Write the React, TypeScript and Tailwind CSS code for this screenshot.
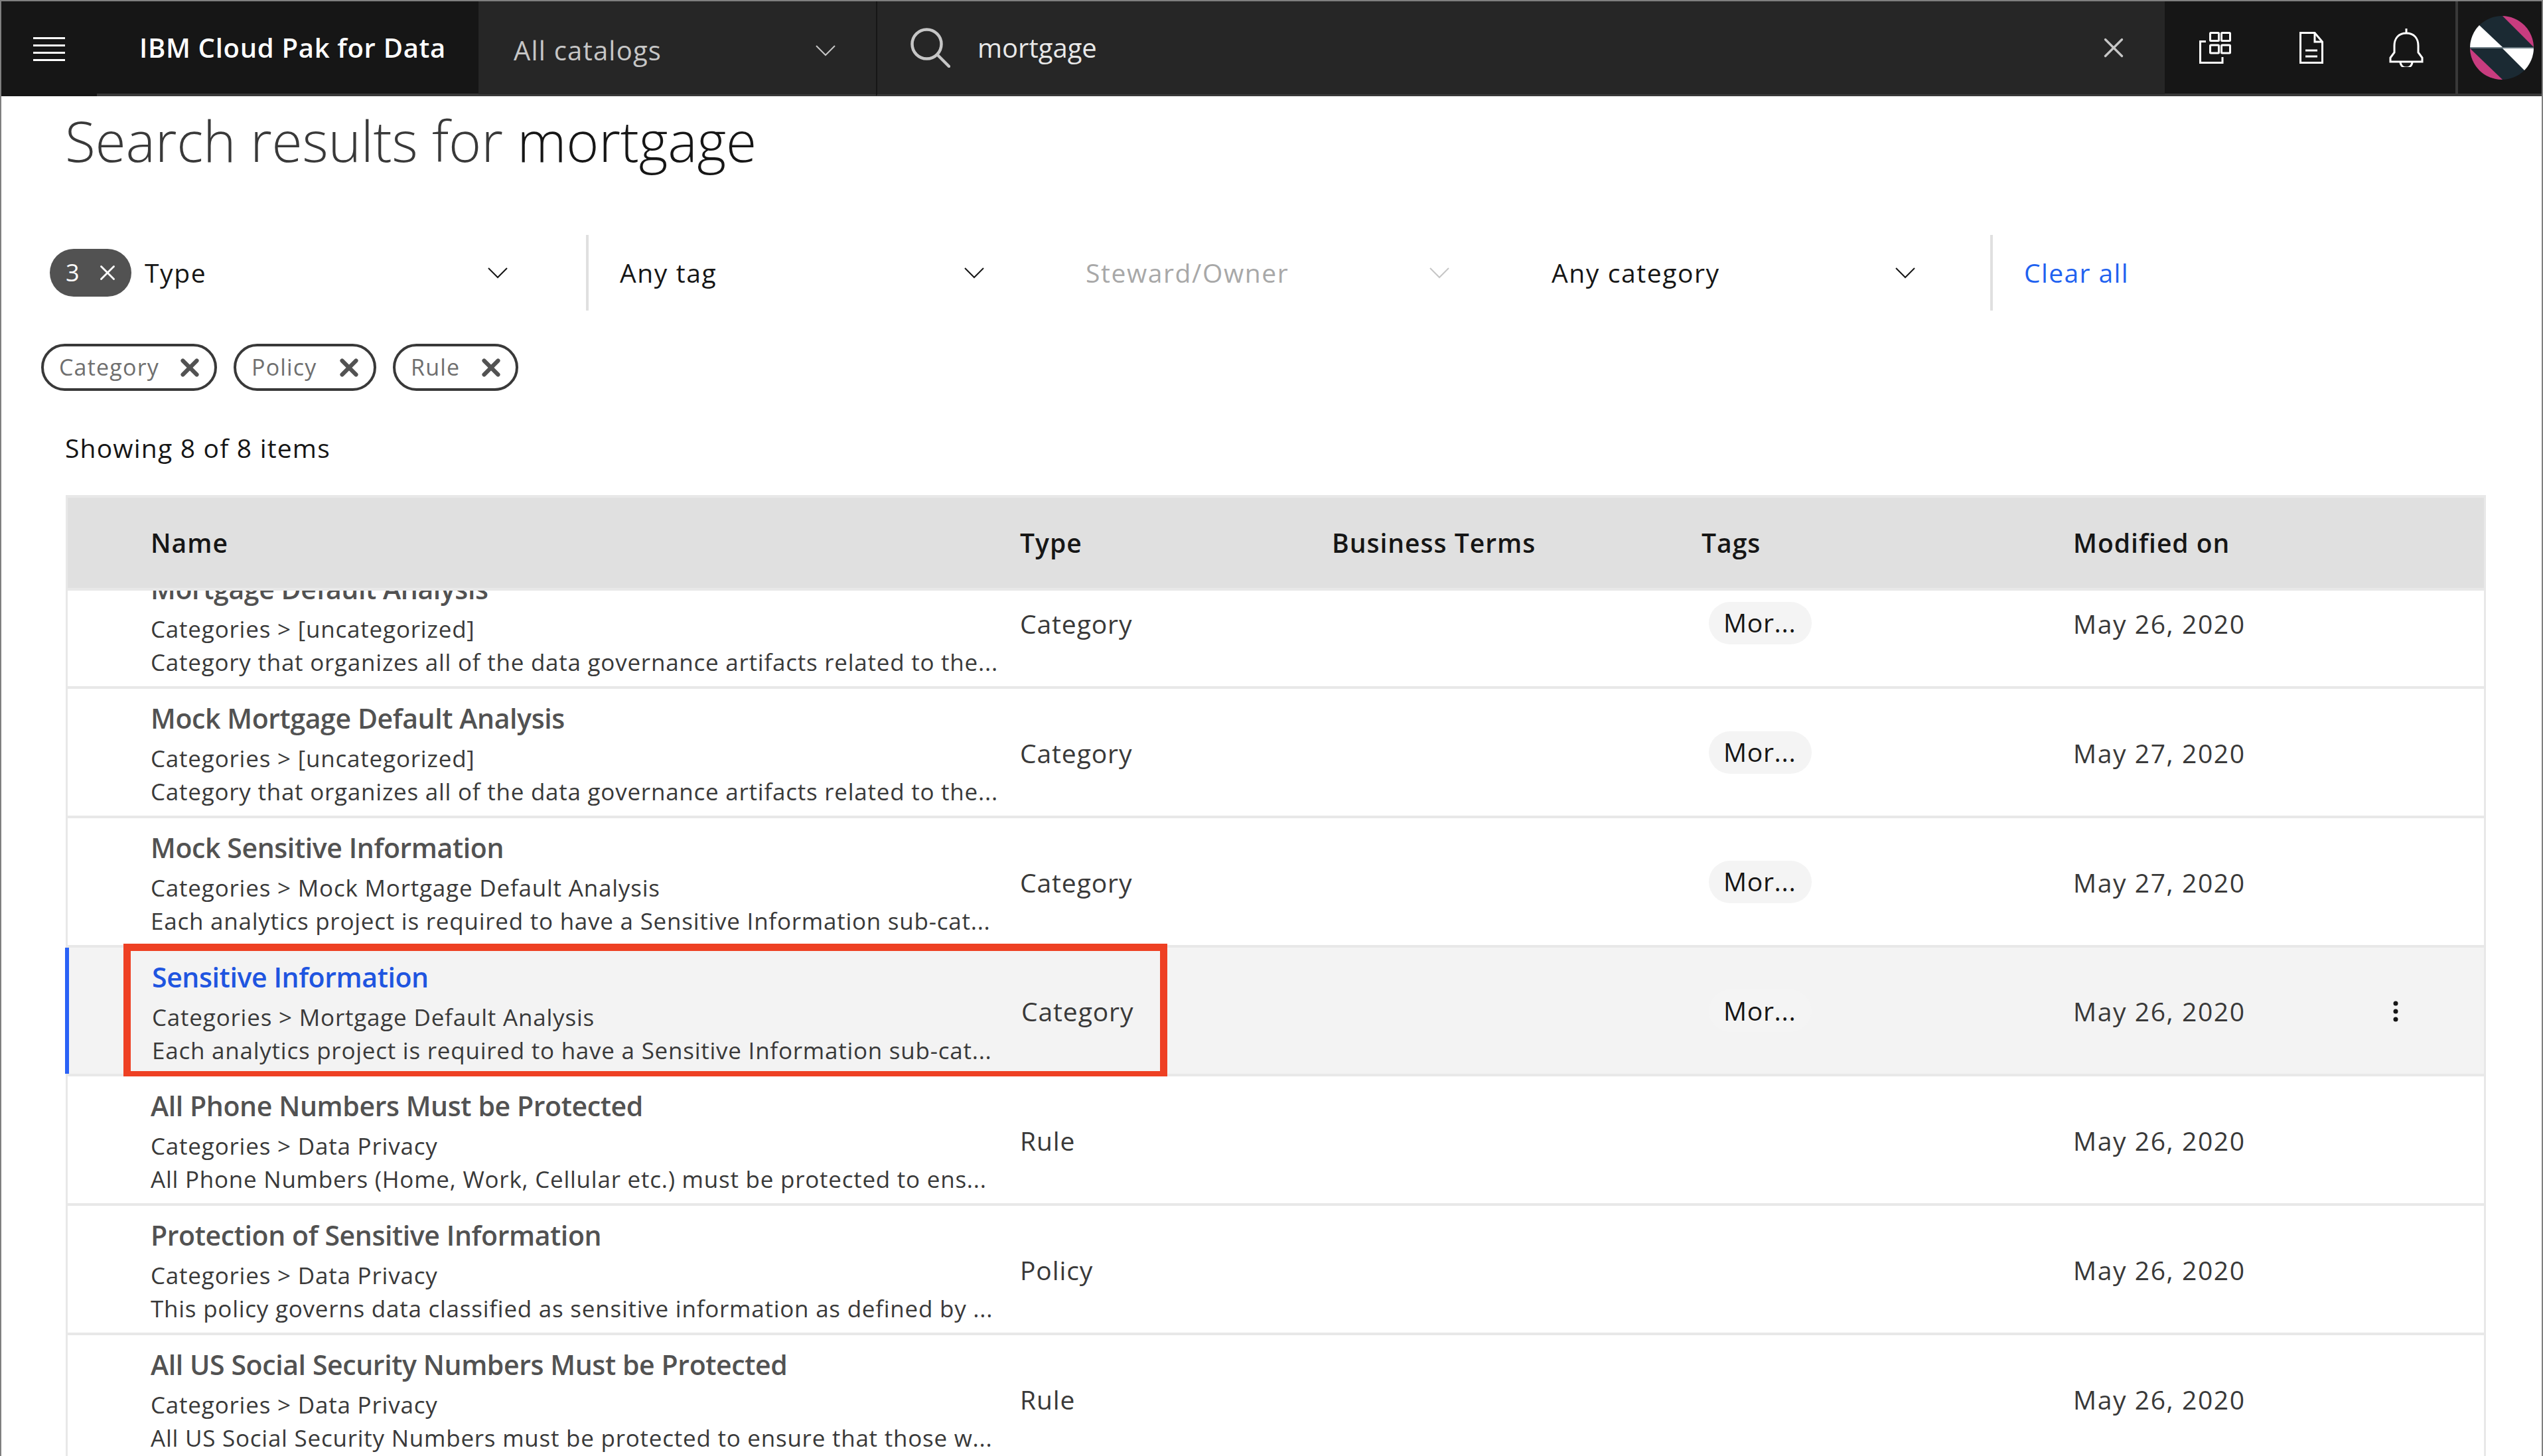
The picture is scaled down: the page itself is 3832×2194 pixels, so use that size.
import React from 'react';
import { X } from 'lucide-react';

const font = { fontFamily: '"Open Sans", "Noto Sans", sans-serif' };

interface ResultRow {
    name: string;
    path: string;
    description: string;
    type: string;
    tag?: boolean;
    date: string;
    selected?: boolean;
}

const rows: ResultRow[] = [
    { name: 'Mortgage Default Analysis', path: 'Categories > [uncategorized]', description: 'Category that organizes all of the data governance artifacts related to the...', type: 'Category', tag: true, date: 'May 26, 2020' },
    { name: 'Mock Mortgage Default Analysis', path: 'Categories > [uncategorized]', description: 'Category that organizes all of the data governance artifacts related to the...', type: 'Category', tag: true, date: 'May 27, 2020' },
    { name: 'Mock Sensitive Information', path: 'Categories > Mock Mortgage Default Analysis', description: 'Each analytics project is required to have a Sensitive Information sub-cat...', type: 'Category', tag: true, date: 'May 27, 2020' },
    { name: 'Sensitive Information', path: 'Categories > Mortgage Default Analysis', description: 'Each analytics project is required to have a Sensitive Information sub-cat...', type: 'Category', tag: true, date: 'May 26, 2020', selected: true },
    { name: 'All Phone Numbers Must be Protected', path: 'Categories > Data Privacy', description: 'All Phone Numbers (Home, Work, Cellular etc.) must be protected to ens...', type: 'Rule', date: 'May 26, 2020' },
    { name: 'Protection of Sensitive Information', path: 'Categories > Data Privacy', description: 'This policy governs data classified as sensitive information as defined by ...', type: 'Policy', date: 'May 26, 2020' },
    { name: 'All US Social Security Numbers Must be Protected', path: 'Categories > Data Privacy', description: 'All US Social Security Numbers must be protected to ensure that those w...', type: 'Rule', date: 'May 26, 2020' },
];

const Chevron: React.FC<{ className?: string }> = ({ className = 'text-[#161616]' }) => (
    <svg width="32" height="18" viewBox="0 0 32 18" fill="none" stroke="currentColor" strokeWidth="2" className={className}>
        <path d="M2 2 L16 16 L30 2" />
    </svg>
);

const AppsIcon = () => (
    <svg width="48" height="48" viewBox="0 0 48 48" fill="none" stroke="white" strokeWidth="3">
        <path d="M10 14.5 H1.5 V46.5 H35 V38" />
        <rect x="16.5" y="1.5" width="13" height="12" rx="1" />
        <rect x="33.5" y="1.5" width="13" height="12" rx="1" />
        <rect x="16.5" y="20" width="13" height="12" rx="1" />
        <rect x="33.5" y="20" width="13" height="12" rx="1" />
    </svg>
);

const DocIcon = () => (
    <svg width="36" height="48" viewBox="0 0 36 48" fill="none" stroke="white" strokeWidth="3">
        <path d="M1.5 1.5 H23 L34.5 15 V46.5 H1.5 Z" />
        <path d="M23 1.5 V15 H34.5" />
        <path d="M9 28 H27 M9 37 H27" />
    </svg>
);

const BellIcon = () => (
    <svg width="52" height="58" viewBox="0 0 52 58" fill="none" stroke="white" strokeWidth="3">
        <path d="M26 0 V7" />
        <path d="M26 7 C14 7 8 15 8 26 V36 L2 44 V50 H50 V44 L44 36 V26 C44 15 38 7 26 7 Z" />
        <path d="M17 50 C17 62 35 62 35 50" />
    </svg>
);

const Avatar = () => (
    <svg width="96" height="96" viewBox="0 0 96 96">
        <defs>
            <clipPath id="avatar-clip">
                <circle cx="48" cy="48" r="48" />
            </clipPath>
        </defs>
        <g clipPath="url(#avatar-clip)">
            <rect width="96" height="96" fill="#1b2a33" />
            <polygon points="49,0 96,47 96,0" fill="#c83c7f" />
            <polygon points="14,14 49,47 0,47 0,14" fill="#ffffff" />
            <polygon points="49,49 96,49 96,82 82,82" fill="#ffffff" />
            <polygon points="0,49 49,96 0,96" fill="#c83c7f" />
            <rect y="47" width="96" height="2" fill="#6b7a82" />
        </g>
    </svg>
);

const Filter: React.FC<{ label: string; width: string; disabled?: boolean; children?: React.ReactNode }> = ({ label, width, disabled, children }) => (
    <div className={`flex items-center ${width}`}>
        {children}
        <span className={`text-[39px] tracking-[1.6px] ${disabled ? 'text-[#a8a8a8]' : 'text-[#161616]'}`}>{label}</span>
        <Chevron className={`ml-auto ${disabled ? 'text-[#c6c6c6]' : 'text-[#161616]'}`} />
    </div>
);

const Chip: React.FC<{ label: string; width: string }> = ({ label, width }) => (
    <div className={`flex h-[71px] items-center justify-between rounded-full border-[4px] border-[#393939] pl-[23px] pr-[16px] ${width}`}>
        <span className="text-[34px] tracking-[1.2px] text-[#6f6f6f]">{label}</span>
        <X size={42} strokeWidth={3.5} className="text-[#525252]" />
    </div>
);

const Row: React.FC<{ row: ResultRow }> = ({ row }) => (
    <div className={`relative grid grid-cols-[1310px_470px_557px_560px_1fr] items-center border-b-[4px] border-[#e8e8e8] pl-[125px] ${row.selected ? 'h-[194px] bg-[#f3f3f3]' : 'h-[195px] bg-white'}`}>
        {row.selected && <div className="absolute -left-[4px] top-0 bottom-0 w-[6px] bg-[#2a62f6]" />}
        <div className={`flex h-full flex-col whitespace-nowrap pt-[20px] ${row.selected ? 'ml-[2px]' : ''}`}>
            <div className={`h-[48px] text-[41px] font-semibold leading-[48px] tracking-[-0.4px] ${row.selected ? 'text-[#1f55e0]' : 'text-[#525252]'}`}>{row.name}</div>
            <div className="mt-[12px] h-[50px] text-[35px] leading-[50px] tracking-[0.8px] text-[#393939]">{row.path}</div>
            <div className="h-[50px] text-[35px] leading-[50px] tracking-[0.76px] text-[#393939]">{row.description}</div>
        </div>
        <div className={`pt-[3px] text-[39px] tracking-[0.9px] text-[#393939] ${row.selected ? 'ml-[2px]' : ''}`}>{row.type}</div>
        <div />
        <div>
            {row.tag && (
                <div className="ml-[11px] flex h-[64px] w-[155px] items-center rounded-full bg-[#f4f4f4] pl-[22px] text-[39px] tracking-[0.7px] text-[#161616]">Mor...</div>
            )}
        </div>
        <div className="pt-[3px] text-[39px] tracking-[1.6px] text-[#393939]">{row.date}</div>
        {row.selected && (
            <svg width="8" height="32" viewBox="0 0 8 32" fill="#161616" className="absolute right-[129px] top-[80px]">
                <circle cx="4" cy="4" r="3.5" />
                <circle cx="4" cy="16" r="3.5" />
                <circle cx="4" cy="28" r="3.5" />
            </svg>
        )}
        {row.selected && <div className="pointer-events-none absolute -top-[6px] left-[84px] h-[203px] w-[1573px] border-[11px] border-[#ee4023]" />}
    </div>
);

const App: React.FC = () => {
    return (
        <div style={font} className="h-[2194px] w-[3832px] overflow-hidden border-x-2 border-t-2 border-[#7f7f7f] bg-white">
            {/* top bar */}
            <header className="flex h-[143px] bg-[#161616]">
                <div className="flex w-[144px] items-center pl-[48px]">
                    <svg width="48" height="36" viewBox="0 0 48 36" fill="white">
                        <rect width="48" height="3" />
                        <rect y="11" width="48" height="3" />
                        <rect y="22" width="48" height="3" />
                        <rect y="33" width="48" height="3" />
                    </svg>
                </div>
                <div className="flex w-[575px] items-center border-b-[4px] border-[#393939] pl-[64px] text-[40px] font-semibold tracking-[0.7px] text-white">IBM Cloud Pak for Data</div>
                <div className="flex w-[599px] items-center border-b-[3px] border-[#393939] bg-[#262626] pl-[53px] pr-[60px] pt-[8px]">
                    <span className="text-[40px] tracking-[1.2px] text-[#c6c6c6]">All catalogs</span>
                    <Chevron className="ml-auto text-[#c6c6c6]" />
                </div>
                <div className="flex w-[1942px] items-center border-b-[3px] border-l-[2px] border-[#161616] border-b-[#393939] bg-[#262626] pl-[50px] pr-[52px]">
                    <svg width="60" height="60" viewBox="0 0 60 60" fill="none" stroke="#c6c6c6" strokeWidth="4.5" strokeLinecap="round">
                        <circle cx="24.5" cy="24.5" r="22" />
                        <path d="M41 41 L58 58" />
                    </svg>
                    <span className="ml-[41px] text-[40px] text-[#e8e8e8]">mortgage</span>
                    <X size={50} strokeWidth={1.6} className="ml-auto text-[#c6c6c6]" />
                </div>
                <div className="flex w-[438px] items-center border-b-[4px] border-[#393939] pl-[52px]">
                    <AppsIcon />
                    <div className="ml-[103px]"><DocIcon /></div>
                    <div className="ml-[99px]"><BellIcon /></div>
                </div>
                <div className="flex flex-1 items-center border-b-[4px] border-l-[4px] border-[#393939] pl-[18px]">
                    <Avatar />
                </div>
            </header>

            <h1 className="ml-[96px] mt-[12px] text-[84px] font-light leading-[110px] tracking-[-0.2px] text-[#393939]">
                Search results for <span className="text-[#161616]">mortgage</span>
            </h1>

            {/* filters */}
            <div className="ml-[73px] mt-[87px] flex h-[114px] items-center">
                <Filter label="Type" width="w-[691px]">
                    <div className="mr-[20px] flex h-[72px] w-[123px] items-center justify-between rounded-full bg-[#525252] pl-[24px] pr-[17px] text-[36px] text-white">
                        3
                        <X size={38} strokeWidth={1.8} />
                    </div>
                </Filter>
                <div className="ml-[117px] h-full w-[4px] bg-[#e0e0e0]" />
                <div className="ml-[47px]"><Filter label="Any tag" width="w-[550px]" /></div>
                <div className="ml-[152px]"><Filter label="Steward/Owner" width="w-[549px]" disabled /></div>
                <div className="ml-[153px]"><Filter label="Any category" width="w-[549px]" /></div>
                <div className="ml-[112px] h-full w-[4px] bg-[#e0e0e0]" />
                <span className="ml-[47px] text-[39px] tracking-[1.4px] text-[#1f62f0]">Clear all</span>
            </div>

            <div className="ml-[60px] mt-[50px] flex gap-[25px]">
                <Chip label="Category" width="w-[265px]" />
                <Chip label="Policy" width="w-[215px]" />
                <Chip label="Rule" width="w-[189px]" />
            </div>

            <div className="ml-[96px] mt-[60px] text-[39px] leading-[52px] tracking-[1.2px] text-[#161616]">Showing 8 of 8 items</div>

            {/* results table */}
            <div className="ml-[97px] mt-[45px] w-[3647px] border-x-[3px] border-t-[4px] border-[#e8e8e8]">
                <div className="grid h-[140px] grid-cols-[1310px_470px_557px_560px_1fr] items-center border-b-[4px] border-[#e8e8e8] bg-[#e0e0e0] pl-[125px] text-[39px] font-semibold tracking-[1px] text-[#161616]">
                    <div>Name</div>
                    <div>Type</div>
                    <div>Business Terms</div>
                    <div>Tags</div>
                    <div>Modified on</div>
                </div>
                {/* list scrolls under the header, first row is partly hidden */}
                <div className="-ml-[4px] h-[1400px] overflow-hidden pl-[4px]">
                    <div className="-mt-[47px]">
                        {rows.map((row) => (
                            <Row key={row.name} row={row} />
                        ))}
                    </div>
                </div>
            </div>
        </div>
    );
};

export default App;
